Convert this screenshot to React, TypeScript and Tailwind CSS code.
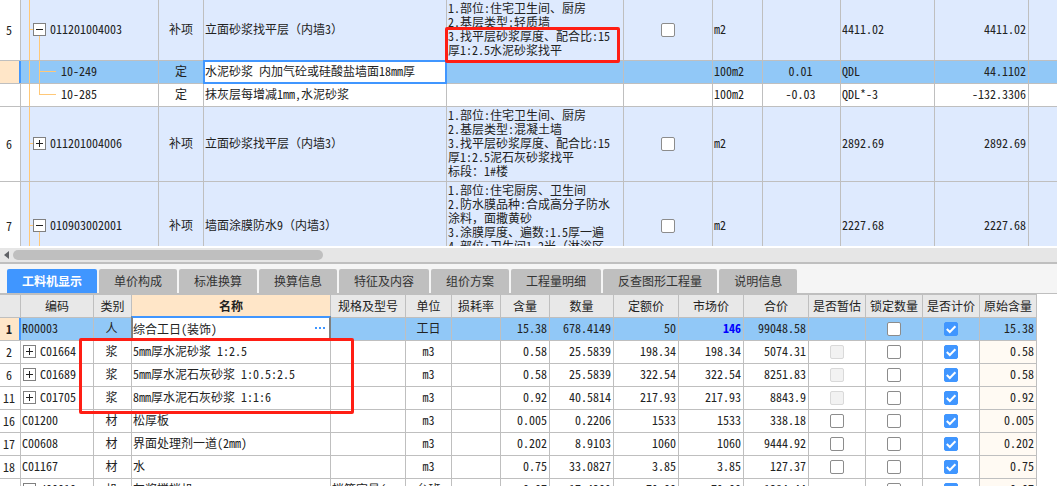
import type { ReactNode } from "react";

const TOP_COLS = [
  "w-[21px]", "w-[138px]", "w-[45px]", "w-[243px]", "w-[177px]", "w-[89px]",
  "w-[50px]", "w-[78px]", "w-[94px]", "w-[94px]", "",
];

const LOW_COLS = [
  "w-[21px]", "w-[73px]", "w-[38px]", "w-[199px]", "w-[75px]", "w-[46px]", "w-[49px]", "w-[49px]",
  "w-[64px]", "w-[65px]", "w-[65px]", "w-[65px]", "w-[57px]", "w-[57px]", "w-[57px]", "w-[57px]", "",
];

type Item = {
  no: string;
  kind: "item" | "quota";
  mark?: "plus" | "minus";
  last?: boolean;
  selected?: boolean;
  height: string;
  code: string;
  type: string;
  name: string;
  desc: string[];
  unit: string;
  content: string;
  expr: string;
  qty: string;
};

const ITEMS: Item[] = [
  {
    no: "5", kind: "item", mark: "minus", height: "h-[61px]", code: "011201004003", type: "补项",
    name: "立面砂浆找平层（内墙3）",
    desc: ["1.部位:住宅卫生间、厨房", "2.基层类型:轻质墙", "3.找平层砂浆厚度、配合比:15", "厚1:2.5水泥砂浆找平"],
    unit: "m2", content: "", expr: "4411.02", qty: "4411.02",
  },
  {
    no: "", kind: "quota", selected: true, height: "h-[23px]", code: "10-249", type: "定",
    name: "水泥砂浆 内加气砼或硅酸盐墙面18mm厚", desc: [],
    unit: "100m2", content: "0.01", expr: "QDL", qty: "44.1102",
  },
  {
    no: "", kind: "quota", last: true, height: "h-[23px]", code: "10-285", type: "定",
    name: "抹灰层每增减1mm,水泥砂浆", desc: [],
    unit: "100m2", content: "-0.03", expr: "QDL*-3", qty: "-132.3306",
  },
  {
    no: "6", kind: "item", mark: "plus", height: "h-[75px]", code: "011201004006", type: "补项",
    name: "立面砂浆找平层（内墙3）",
    desc: ["1.部位:住宅卫生间、厨房", "2.基层类型:混凝土墙", "3.找平层砂浆厚度、配合比:15", "厚1:2.5泥石灰砂浆找平", "标段：1#楼"],
    unit: "m2", content: "", expr: "2892.69", qty: "2892.69",
  },
  {
    no: "7", kind: "item", mark: "minus", height: "h-[89px]", code: "010903002001", type: "补项",
    name: "墙面涂膜防水9（内墙3）",
    desc: ["1.部位:住宅厨房、卫生间", "2.防水膜品种:合成高分子防水", "涂料，面撒黄砂", "3.涂膜厚度、遍数:1.5厚一遍", "4.部位:卫生间1.2米（淋浴区"],
    unit: "m2", content: "", expr: "2227.68", qty: "2227.68",
  },
];

const TABS = ["工料机显示", "单价构成", "标准换算", "换算信息", "特征及内容", "组价方案", "工程量明细", "反查图形工程量", "说明信息"];

const HEADS = ["编码", "类别", "名称", "规格及型号", "单位", "损耗率", "含量", "数量", "定额价", "市场价", "合价", "是否暂估", "锁定数量", "是否计价", "原始含量"];

type Res = {
  no: string;
  code: string;
  group?: boolean;
  type: string;
  name: string;
  spec?: string;
  unit: string;
  rate: string;
  qty: string;
  price: string;
  market: string;
  total: string;
  estimate: "none" | "off" | "disabled";
  selected?: boolean;
};

const RES: Res[] = [
  { no: "1", code: "R00003", type: "人", name: "综合工日(装饰)", unit: "工日", rate: "15.38", qty: "678.4149", price: "50", market: "146", total: "99048.58", estimate: "none", selected: true },
  { no: "2", code: "C01664", group: true, type: "浆", name: "5mm厚水泥砂浆 1:2.5", unit: "m3", rate: "0.58", qty: "25.5839", price: "198.34", market: "198.34", total: "5074.31", estimate: "disabled" },
  { no: "6", code: "C01689", group: true, type: "浆", name: "5mm厚水泥石灰砂浆 1:0.5:2.5", unit: "m3", rate: "0.58", qty: "25.5839", price: "322.54", market: "322.54", total: "8251.83", estimate: "disabled" },
  { no: "11", code: "C01705", group: true, type: "浆", name: "8mm厚水泥石灰砂浆 1:1:6", unit: "m3", rate: "0.92", qty: "40.5814", price: "217.93", market: "217.93", total: "8843.9", estimate: "disabled" },
  { no: "16", code: "C01200", type: "材", name: "松厚板", unit: "m3", rate: "0.005", qty: "0.2206", price: "1533", market: "1533", total: "338.18", estimate: "off" },
  { no: "17", code: "C00608", type: "材", name: "界面处理剂一道(2mm)", unit: "m3", rate: "0.202", qty: "8.9103", price: "1060", market: "1060", total: "9444.92", estimate: "off" },
  { no: "18", code: "C01167", type: "材", name: "水", unit: "m3", rate: "0.75", qty: "33.0827", price: "3.85", market: "3.85", total: "127.37", estimate: "off" },
  { no: "", code: "J00010", group: true, type: "机", name: "灰浆搅拌机", spec: "拌筒容量(", unit: "台班", rate: "0.07", qty: "17.4209", price: "79.00", market: "79.00", total: "1384.44", estimate: "none" },
];

/** Half-width Latin text whose Chinese punctuation keeps its full width. */
function Mixed({ text }: { text: string }) {
  return (
    <>
      {text.split(/([（），：])/).map((part, i) =>
        i % 2 ? <span key={i} className="[font-feature-settings:normal]">{part}</span> : part,
      )}
    </>
  );
}

function Expander({ mark, label }: { mark: "plus" | "minus"; label: string }) {
  return (
    <button aria-label={label} className="relative block size-[13px] shrink-0 border border-[#808080] bg-white">
      <svg viewBox="0 0 11 11" className="block size-[11px]" stroke="#222" strokeWidth="1">
        <path d={mark === "plus" ? "M2 5.5H9M5.5 2V9" : "M2 5.5H9"} />
      </svg>
    </button>
  );
}

function Check({ label, checked, disabled }: { label: string; checked?: boolean; disabled?: boolean }) {
  return (
    <span className="mx-auto grid size-[14px] place-items-center">
      <input
        type="checkbox"
        aria-label={label}
        defaultChecked={checked}
        disabled={disabled}
        className="peer col-start-1 row-start-1 m-0 size-[14px] appearance-none rounded-[2px] border border-[#8c8c8c] bg-white checked:border-[#4096ff] checked:bg-[#4096ff] disabled:border-[#d9d9d9] disabled:bg-[#f2f2f2]"
      />
      <svg viewBox="0 0 14 14" className="pointer-events-none col-start-1 row-start-1 hidden size-[14px] peer-checked:block" fill="none" stroke="#fff" strokeWidth="2">
        <path d="M2.8 7 5.8 10 11.4 4.2" />
      </svg>
    </span>
  );
}

function TreeGuide({ item }: { item: Item }) {
  const quota = item.kind === "quota";
  return (
    <svg className="absolute inset-0 size-full" fill="#ffc878" shapeRendering="crispEdges" aria-hidden="true">
      <rect x="8" y="0" width="1" height="100%" />
      {!quota && <rect x="9" y="50%" width="4" height="1" transform="translate(0 -1)" />}
      {item.mark === "minus" && <rect x="18" y="50%" width="1" height="50%" />}
      {quota && <rect x="18" y="0" width="1" height={item.last ? "50%" : "100%"} />}
      {quota && <rect x="18" y="50%" width="17" height="1" transform="translate(0 -1)" />}
    </svg>
  );
}

function Cell({ className = "pb-[2px]", children }: { className?: string; children?: ReactNode }) {
  return <td className={`overflow-hidden border-r border-b border-[#bfbfbf] whitespace-nowrap ${className}`}>{children}</td>;
}

function ItemRow({ item }: { item: Item }) {
  const bg = item.selected ? "bg-[#91c8f7]" : item.kind === "item" ? "bg-[#deeafe]" : "bg-white";
  return (
    <tr className={`${item.height} ${bg}`}>
      <td className={`relative border-r border-b border-[#bfbfbf] pr-[2px] text-center ${item.selected ? "bg-[#ffe6c8]" : "bg-white"}`}>
        {item.no}
        {item.selected && <span className="absolute inset-y-0 -right-px w-[2px] bg-[#4096ff]" />}
      </td>
      <Cell className="relative pb-[2px]">
        <TreeGuide item={item} />
        <div className={`relative flex items-center gap-[4px] ${item.kind === "item" ? "pl-[12px]" : "pl-[40px]"}`}>
          {item.mark && <Expander mark={item.mark} label={`展开 ${item.code}`} />}
          <span>{item.code}</span>
        </div>
      </Cell>
      <Cell className="pb-[2px] text-center">{item.type}</Cell>
      <td className={`relative border-r border-b border-[#bfbfbf] pb-[2px] pl-px whitespace-nowrap ${item.selected ? "bg-white" : ""}`}>
        <Mixed text={item.name} />
        {item.selected && <span className="pointer-events-none absolute -inset-px border-2 border-[#4096ff]" />}
      </td>
      <Cell className={item.height === "h-[89px]" ? "pt-px pl-px align-top" : "pb-[2px] pl-px"}>
        {item.desc.map((line) => (
          <div key={line}><Mixed text={line} /></div>
        ))}
      </Cell>
      <Cell className="p-0">{item.kind === "item" && <div className="flex"><Check label={`选择 ${item.code}`} /></div>}</Cell>
      <Cell className="pb-[2px] pl-px">{item.unit}</Cell>
      <Cell className="pr-[2px] pb-[2px] text-center">{item.content}</Cell>
      <Cell className="pb-[2px] pl-px">{item.expr}</Cell>
      <Cell className="pr-[2px] pb-[2px] text-right">{item.qty}</Cell>
      <td className="border-b border-[#bfbfbf]" />
    </tr>
  );
}

function ResRow({ r }: { r: Res }) {
  const num = "pr-[2px] pb-[2px] text-right";
  return (
    <tr className={`h-[23px] ${r.selected ? "bg-[#91c8f7]" : ""}`}>
      <td className={`relative border-r border-b border-[#bfbfbf] pr-[2px] text-center ${r.selected ? "bg-[#ffe6c8] font-bold" : ""}`}>
        {r.no}
        {r.selected && <span className="absolute inset-y-0 -right-px w-[2px] bg-[#4096ff]" />}
      </td>
      <Cell className={r.group ? "pb-[2px] pl-[2px]" : "pb-[2px] pl-px"}>
        <div className="flex items-center gap-[4px]">
          {r.group && <Expander mark="plus" label={`展开 ${r.code}`} />}
          <span>{r.code}</span>
        </div>
      </Cell>
      <Cell className="pr-[2px] pb-[2px] text-center">{r.type}</Cell>
      {r.selected ? (
        <td className="relative border-r border-b border-[#bfbfbf] bg-white pb-[2px] pl-px">
          <div className="flex items-center pr-[5px]">
            <input aria-label="名称" defaultValue={r.name} className="h-[18px] min-w-0 flex-1 bg-transparent outline-none" />
            <button aria-label="选择材料" className="flex gap-[2px]">
              <i className="size-[2px] bg-[#4096ff]" />
              <i className="size-[2px] bg-[#4096ff]" />
              <i className="size-[2px] bg-[#4096ff]" />
            </button>
          </div>
          <span className="pointer-events-none absolute -inset-x-px -top-[2px] bottom-0 border-x-2 border-t-2 border-x-[#808080] border-t-[#4096ff]" />
        </td>
      ) : (
        <Cell className="pb-[2px] pl-px">{r.name}</Cell>
      )}
      <Cell className="pb-[2px] pl-px">{r.spec}</Cell>
      <Cell className="pb-[2px] text-center">{r.unit}</Cell>
      <Cell />
      <Cell className={num}>{r.rate}</Cell>
      <Cell className={num}>{r.qty}</Cell>
      <Cell className={num}>{r.price}</Cell>
      <Cell className={`${num} ${r.selected ? "font-bold text-[#0000ff]" : ""}`}>{r.market}</Cell>
      <Cell className={num}>{r.total}</Cell>
      <Cell className="p-0">{r.estimate !== "none" && <div className="flex"><Check label={`是否暂估 ${r.code}`} disabled={r.estimate === "disabled"} /></div>}</Cell>
      <Cell className="p-0"><div className="flex"><Check label={`锁定数量 ${r.code}`} /></div></Cell>
      <Cell className="p-0"><div className="flex"><Check label={`是否计价 ${r.code}`} checked /></div></Cell>
      <Cell className={`${num} ${r.selected ? "" : "bg-[#fffaf3]"}`}>{r.rate}</Cell>
      <td className="bg-white" />
    </tr>
  );
}

export default function App() {
  return (
    <main className="relative flex h-screen flex-col overflow-hidden bg-white font-['Noto_Sans_CJK_SC',sans-serif] text-[12px] leading-[14px] text-[#222] [font-feature-settings:'hwid']">
      <section className="h-[246px] shrink-0 overflow-hidden">
        <table className="w-full table-fixed border-separate border-spacing-0">
          <colgroup>{TOP_COLS.map((w, i) => <col key={i} className={w} />)}</colgroup>
          <tbody>{ITEMS.map((item) => <ItemRow key={item.code} item={item} />)}</tbody>
        </table>
      </section>

      <div className="mt-[2px] flex h-[16px] shrink-0 items-center gap-[4px] border-b-2 border-[#bfbfbf] bg-[#e6e6e6] pl-[4px]">
        <button aria-label="向左滚动">
          <svg viewBox="0 0 5 8" className="block h-[8px] w-[5px]" fill="#606266"><path d="M5 0V8L0 4Z" /></svg>
        </button>
        <div className="h-[10px] w-[310px] rounded-full bg-[#bfbfbf]" />
      </div>

      <nav className="flex shrink-0 gap-[2px] border-b border-[#bfbfbf] bg-[#f5f5f5] pt-[5px] pl-[7px]">
        {TABS.map((t, i) => (
          <button key={t} className={`h-[24px] rounded-t-[2px] px-[15px] whitespace-nowrap ${i === 0 ? "bg-[#4096ff] font-bold text-white" : "bg-[#bfbfbf] text-[#333]"}`}>
            {t}
          </button>
        ))}
      </nav>

      <section className="min-h-0 flex-1 overflow-hidden">
        <table className="w-full table-fixed border-separate border-spacing-0">
          <colgroup>{LOW_COLS.map((w, i) => <col key={i} className={w} />)}</colgroup>
          <thead>
            <tr className="h-[24px]">
              <td className="border-y border-r border-[#bfbfbf] bg-[#e8e8e8]" />
              {HEADS.map((h) => (
                <th key={h} scope="col" className={`border-y border-r border-[#bfbfbf] text-center whitespace-nowrap ${h === "名称" ? "bg-[#ffe6c8] font-bold" : "bg-[#e8e8e8] font-normal"}`}>
                  {h}
                </th>
              ))}
              <td />
            </tr>
          </thead>
          <tbody>{RES.map((r) => <ResRow key={r.code} r={r} />)}</tbody>
        </table>
      </section>

      <div className="pointer-events-none absolute top-[27px] left-[445px] h-[36px] w-[175px] rounded-[2px] border-3 border-[#ff1e14]" />
      <div className="pointer-events-none absolute top-[338px] left-[79px] h-[76px] w-[275px] rounded-[2px] border-3 border-[#ff1e14]" />
    </main>
  );
}
